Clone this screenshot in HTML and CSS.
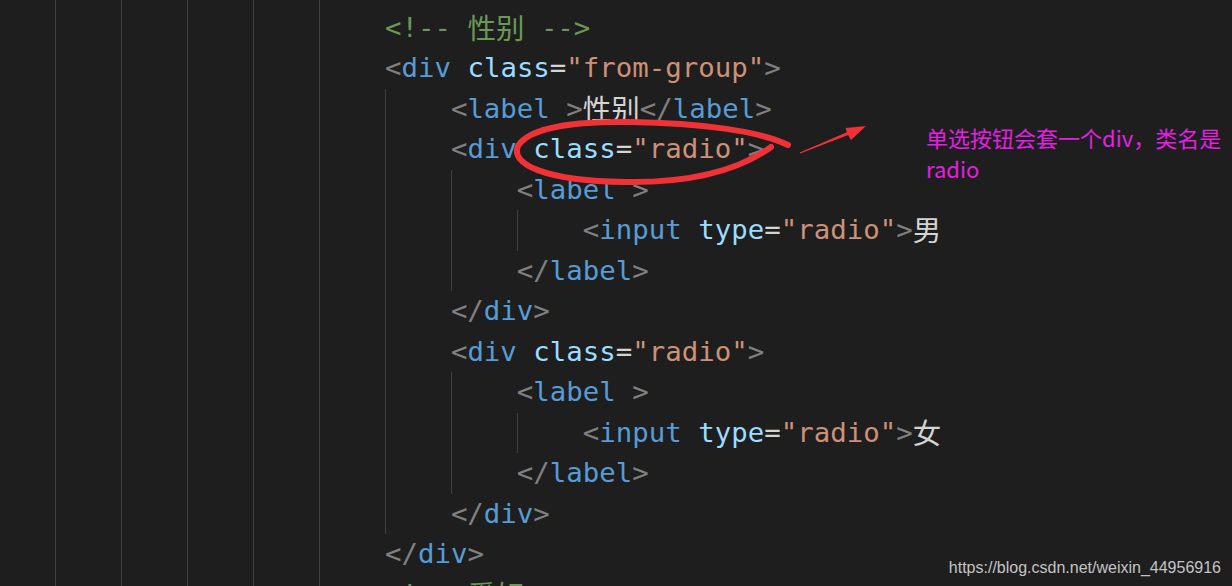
FILE: index.html
```html
<!DOCTYPE html>
<html lang="zh-CN">
<head>
    <meta charset="UTF-8">
    <meta name="viewport" content="width=device-width, initial-scale=1.0">
    <title>单选按钮 radio</title>
    <link rel="stylesheet" href="styles.css">
</head>
<body>
    <!-- Editor: every indent level is one .ind cell, its left border is the indent guide -->
    <div class="editor">
        <div class="line partial"><span class="ind"></span><span class="ind"></span><span class="ind"></span><span class="ind"></span><span class="ind"></span><span class="ind"></span></div>
        <div class="line"><span class="ind"></span><span class="ind"></span><span class="ind"></span><span class="ind"></span><span class="ind"></span><span class="ind"></span><span class="code c">&lt;!-- <span class="cjk">性别</span> --&gt;</span></div>
        <div class="line"><span class="ind"></span><span class="ind"></span><span class="ind"></span><span class="ind"></span><span class="ind"></span><span class="ind"></span><span class="code"><span class="p">&lt;</span><span class="t">div</span> <span class="a">class</span>=<span class="s">"from-group"</span><span class="p">&gt;</span></span></div>
        <div class="line"><span class="ind"></span><span class="ind"></span><span class="ind"></span><span class="ind"></span><span class="ind"></span><span class="ind"></span><span class="ind"></span><span class="code"><span class="p">&lt;</span><span class="t">label</span> <span class="p">&gt;</span><span class="cjk">性别</span><span class="p">&lt;/</span><span class="t">label</span><span class="p">&gt;</span></span></div>
        <div class="line"><span class="ind"></span><span class="ind"></span><span class="ind"></span><span class="ind"></span><span class="ind"></span><span class="ind"></span><span class="ind"></span><span class="code"><span class="p">&lt;</span><span class="t">div</span> <span class="a">class</span>=<span class="s">"radio"</span><span class="p">&gt;</span></span></div>
        <div class="line"><span class="ind"></span><span class="ind"></span><span class="ind"></span><span class="ind"></span><span class="ind"></span><span class="ind"></span><span class="ind"></span><span class="ind"></span><span class="code"><span class="p">&lt;</span><span class="t">label</span> <span class="p">&gt;</span></span></div>
        <div class="line"><span class="ind"></span><span class="ind"></span><span class="ind"></span><span class="ind"></span><span class="ind"></span><span class="ind"></span><span class="ind"></span><span class="ind"></span><span class="ind"></span><span class="code"><span class="p">&lt;</span><span class="t">input</span> <span class="a">type</span>=<span class="s">"radio"</span><span class="p">&gt;</span><span class="cjk">男</span></span></div>
        <div class="line"><span class="ind"></span><span class="ind"></span><span class="ind"></span><span class="ind"></span><span class="ind"></span><span class="ind"></span><span class="ind"></span><span class="ind"></span><span class="code"><span class="p">&lt;/</span><span class="t">label</span><span class="p">&gt;</span></span></div>
        <div class="line"><span class="ind"></span><span class="ind"></span><span class="ind"></span><span class="ind"></span><span class="ind"></span><span class="ind"></span><span class="ind"></span><span class="code"><span class="p">&lt;/</span><span class="t">div</span><span class="p">&gt;</span></span></div>
        <div class="line"><span class="ind"></span><span class="ind"></span><span class="ind"></span><span class="ind"></span><span class="ind"></span><span class="ind"></span><span class="ind"></span><span class="code"><span class="p">&lt;</span><span class="t">div</span> <span class="a">class</span>=<span class="s">"radio"</span><span class="p">&gt;</span></span></div>
        <div class="line"><span class="ind"></span><span class="ind"></span><span class="ind"></span><span class="ind"></span><span class="ind"></span><span class="ind"></span><span class="ind"></span><span class="ind"></span><span class="code"><span class="p">&lt;</span><span class="t">label</span> <span class="p">&gt;</span></span></div>
        <div class="line"><span class="ind"></span><span class="ind"></span><span class="ind"></span><span class="ind"></span><span class="ind"></span><span class="ind"></span><span class="ind"></span><span class="ind"></span><span class="ind"></span><span class="code"><span class="p">&lt;</span><span class="t">input</span> <span class="a">type</span>=<span class="s">"radio"</span><span class="p">&gt;</span><span class="cjk">女</span></span></div>
        <div class="line"><span class="ind"></span><span class="ind"></span><span class="ind"></span><span class="ind"></span><span class="ind"></span><span class="ind"></span><span class="ind"></span><span class="ind"></span><span class="code"><span class="p">&lt;/</span><span class="t">label</span><span class="p">&gt;</span></span></div>
        <div class="line"><span class="ind"></span><span class="ind"></span><span class="ind"></span><span class="ind"></span><span class="ind"></span><span class="ind"></span><span class="ind"></span><span class="code"><span class="p">&lt;/</span><span class="t">div</span><span class="p">&gt;</span></span></div>
        <div class="line"><span class="ind"></span><span class="ind"></span><span class="ind"></span><span class="ind"></span><span class="ind"></span><span class="ind"></span><span class="code"><span class="p">&lt;/</span><span class="t">div</span><span class="p">&gt;</span></span></div>
        <div class="line"><span class="ind"></span><span class="ind"></span><span class="ind"></span><span class="ind"></span><span class="ind"></span><span class="ind"></span><span class="code c">&lt;!-- <span class="cjk">爱好</span> --&gt;</span></div>
    </div>

    <!-- Hand-drawn markup on top of the screenshot -->
    <svg class="ink" width="1232" height="586" viewBox="0 0 1232 586">
        <path d="M788,145 C760,131 700,123 630,122 C568,121 528,129 518,146 C510,164 545,181 625,182 C695,183 742,168 771,147"
              fill="none" stroke="#f03237" stroke-width="6" stroke-linecap="round" stroke-linejoin="round"/>
        <polygon points="799.8,152.5 846.9,132.2 845.5,128 866,126 851,140 848.1,135 800.2,153.5" fill="#f03237"/>
    </svg>

    <p class="note">单选按钮会套一个div，类名是radio</p>

    <div class="mark">https://blog.csdn.net/weixin_44956916</div>
</body>
</html>
```

FILE: styles.css
```css
/* Global */
* { box-sizing: border-box; margin: 0; padding: 0; }
html, body { height: 100%; }
body {
    position: relative;
    overflow: hidden;
    background: #1e1e1e;
    font-family: "DejaVu Sans Mono", "Noto Sans CJK SC", monospace;
}

/* Editor */
.editor {
    margin-left: -10.8px;
    font-size: 27.4px;
}
.line {
    display: flex;
    height: 40.5px;
    line-height: 40.5px;
}
.line.partial { height: 7.5px; }
.ind {
    flex: none;
    width: 4ch;
    border-left: 1px solid #404040;
}
.code { white-space: pre; color: #d4d4d4; }

/* Dark+ tokens */
.p { color: #808080; }
.t { color: #569cd6; }
.a { color: #9cdcfe; }
.s { color: #ce9178; }
.c { color: #6a9955; }

.cjk {
    font-family: "Noto Sans CJK SC", sans-serif;
    font-size: 28.5px;
    line-height: 1;
    vertical-align: -2px;
}

/* Annotation */
.ink {
    position: absolute;
    left: 0;
    top: 0;
    pointer-events: none;
}
.note {
    position: absolute;
    left: 926px;
    top: 122px;
    width: 300px;
    font-family: "Noto Sans CJK SC", sans-serif;
    font-size: 22px;
    line-height: 31px;
    color: #e320e3;
}

/* Watermark */
.mark {
    position: absolute;
    right: 11px;
    top: 559px;
    font-family: "Liberation Sans", Arial, sans-serif;
    font-size: 16px;
    line-height: 18px;
    color: #c4c4c4;
}
```
